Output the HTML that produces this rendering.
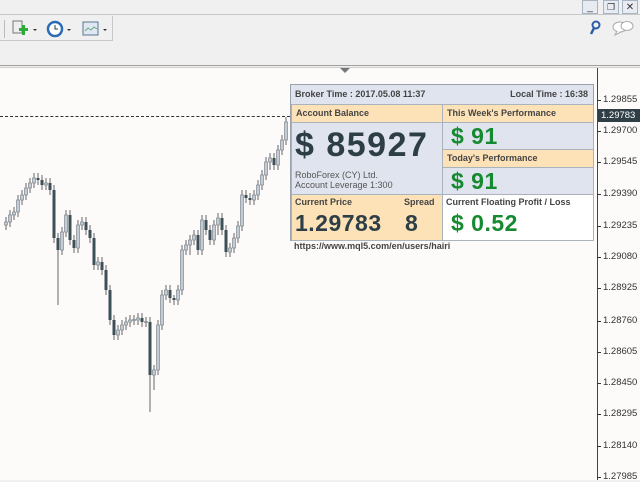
<!DOCTYPE html>
<html><head><meta charset="utf-8"><style>
*{margin:0;padding:0;box-sizing:border-box}
body{width:640px;height:480px;overflow:hidden;background:#f0f0f0;font-family:"Liberation Sans",sans-serif;position:relative}
.abs{position:absolute}
.panel{position:absolute;left:290px;top:84px;width:304px;height:157px;border:1px solid #9aa3ad;background:#dfe4ee}
.c{position:absolute;border:1px solid #aab2bb}
.lbl{font-size:9px;font-weight:bold;color:#444;padding:3px 0 0 4px}
.pe{background:#fde2b8}
.bl{background:#dfe4ee}
.g{color:#168a30;font-weight:bold;font-size:23px;position:absolute;letter-spacing:0.5px}
.ps{position:absolute;left:603px;font-size:9.5px;color:#333}
.tk{position:absolute;left:597px;width:4px;height:1px;background:#333}
</style></head><body>
<div class="abs" style="left:0;top:0;width:640px;height:15px;background:#f0f0f0;border-bottom:1px solid #c8c8c8"></div>
<div class="abs" style="left:582px;top:0;width:16px;height:14px;border:1px solid #a9b4c2;background:#e8ecf2;font-size:10px;text-align:center;line-height:14px;color:#333">_</div>
<div class="abs" style="left:603px;top:0;width:16px;height:14px;border:1px solid #a9b4c2;background:#e8ecf2;font-size:9px;text-align:center;line-height:13px;color:#333">❐</div>
<div class="abs" style="left:622px;top:0;width:16px;height:14px;border:1px solid #a9b4c2;background:#e8ecf2;font-size:10px;text-align:center;line-height:13px;color:#333">✕</div>
<div class="abs" style="left:0;top:16px;width:113px;height:25px;border-bottom:1px solid #c8c8c8;border-right:1px solid #c8c8c8"></div>
<div class="abs" style="left:4px;top:20px;width:1px;height:18px;background:#bbb"></div>
<svg class="abs" style="left:10px;top:18px" width="110" height="22">
<rect x="3" y="3" width="9" height="12" fill="#eee" stroke="#777"/><rect x="9" y="10" width="9" height="3" fill="#2eaa3a"/><rect x="12" y="7" width="3" height="10" fill="#2eaa3a"/>
<path d="M23 11 l4 0 l-2 2z" fill="#333"/>
<circle cx="45" cy="11" r="7" fill="#fff" stroke="#2c6cb5" stroke-width="2.5"/><path d="M45 7 V11 H48" stroke="#333" fill="none"/>
<path d="M57 11 l4 0 l-2 2z" fill="#333"/>
<rect x="73" y="4" width="15" height="13" fill="#dfe8f2" stroke="#5a7590"/><path d="M75 13 l3-3 3 2 3-3 3 2" stroke="#6a8" fill="none"/>
<path d="M93 11 l4 0 l-2 2z" fill="#333"/>
</svg>
<svg class="abs" style="left:588px;top:20px" width="14" height="16"><circle cx="8" cy="5" r="3.5" fill="none" stroke="#2c5ea8" stroke-width="2"/><path d="M6 8 L3 14" stroke="#2c5ea8" stroke-width="2.5"/></svg>
<svg class="abs" style="left:612px;top:20px" width="24" height="16"><ellipse cx="8" cy="7" rx="7" ry="5" fill="#fff" stroke="#aaa"/><ellipse cx="15" cy="6" rx="6" ry="4.5" fill="#fff" stroke="#aaa"/><path d="M5 11 L3 15 L9 12" fill="#fff" stroke="#aaa"/></svg>
<div class="abs" style="left:0;top:65px;width:640px;height:3px;border-top:1px solid #a0a0a0;border-bottom:1px solid #d0d0d0"></div>
<div class="abs" style="left:0;top:68px;width:640px;height:412px;background:#fdfafa"></div>
<div class="abs" style="left:597px;top:68px;width:1px;height:412px;background:#444"></div>
<svg class="abs" style="left:340px;top:68px" width="12" height="6"><path d="M0 0 H10 L5 5z" fill="#777"/></svg>
<div class="abs" style="left:0;top:116px;width:290px;border-top:1px dashed #333"></div>
<svg class="abs" style="left:0;top:0" width="300" height="480">
<path stroke="#666" stroke-width="1" d="M6 217V230M10 210V227M14 207V220M18 195V217M22 190V205M26 183V200M30 178V193M34 173V188M38 173V185M42 175V190M46 178V190M50 178V195M54 185V243M58 233V305M62 227V255M66 210V237M70 210V245M74 235V253M78 220V253M82 217V230M86 217V235M90 225V243M94 233V270M98 257V270M102 257V275M106 265V295M110 285V325M114 315V340M118 325V340M122 320V335M126 317V330M130 315V327M134 315V325M138 313V325M142 313V327M146 317V327M150 317V412M154 365V390M158 320V375M162 290V330M166 285V300M170 285V303M174 295V305M178 285V305M182 245V295M186 240V255M190 235V255M194 230V245M198 230V255M202 215V255M206 215V235M210 225V245M214 220V245M218 213V235M222 213V235M226 225V257M230 243V257M234 233V253M238 221V243M242 190V231M246 190V203M250 193V205M254 190V205M258 180V200M262 170V190M266 157V180M270 153V170M274 153V170M278 145V170M282 135V155M286 117V145"/>
<g fill="#c5cbd1" stroke="#7d8a91" stroke-width="0.7">
<rect x="4.5" y="222" width="3" height="3"/><rect x="8.5" y="215" width="3" height="7"/><rect x="12.5" y="212" width="3" height="3"/><rect x="16.5" y="200" width="3" height="12"/><rect x="20.5" y="195" width="3" height="5"/><rect x="24.5" y="188" width="3" height="7"/><rect x="28.5" y="183" width="3" height="5"/><rect x="32.5" y="178" width="3" height="5"/><rect x="44.5" y="183" width="3" height="2"/><rect x="60.5" y="232" width="3" height="18"/><rect x="64.5" y="215" width="3" height="17"/><rect x="76.5" y="225" width="3" height="23"/><rect x="80.5" y="222" width="3" height="3"/><rect x="96.5" y="262" width="3" height="3"/><rect x="116.5" y="330" width="3" height="5"/><rect x="120.5" y="325" width="3" height="5"/><rect x="124.5" y="322" width="3" height="3"/><rect x="128.5" y="320" width="3" height="2"/><rect x="132.5" y="319.5" width="3" height="1"/><rect x="136.5" y="318" width="3" height="2"/><rect x="144.5" y="321.5" width="3" height="1"/><rect x="152.5" y="370" width="3" height="5"/><rect x="156.5" y="325" width="3" height="45"/><rect x="160.5" y="295" width="3" height="30"/><rect x="164.5" y="290" width="3" height="5"/><rect x="176.5" y="290" width="3" height="10"/><rect x="180.5" y="250" width="3" height="40"/><rect x="184.5" y="245" width="3" height="5"/><rect x="188.5" y="240" width="3" height="5"/><rect x="192.5" y="235" width="3" height="5"/><rect x="200.5" y="220" width="3" height="30"/><rect x="212.5" y="225" width="3" height="15"/><rect x="216.5" y="218" width="3" height="7"/><rect x="228.5" y="248" width="3" height="4"/><rect x="232.5" y="238" width="3" height="10"/><rect x="236.5" y="226" width="3" height="12"/><rect x="240.5" y="195" width="3" height="31"/><rect x="252.5" y="195" width="3" height="5"/><rect x="256.5" y="185" width="3" height="10"/><rect x="260.5" y="175" width="3" height="10"/><rect x="264.5" y="162" width="3" height="13"/><rect x="268.5" y="158" width="3" height="4"/><rect x="276.5" y="150" width="3" height="15"/><rect x="280.5" y="140" width="3" height="10"/><rect x="284.5" y="122" width="3" height="18"/>
</g>
<g fill="#3d5058">
<rect x="36.5" y="178" width="3" height="2"/><rect x="40.5" y="180" width="3" height="5"/><rect x="48.5" y="183" width="3" height="7"/><rect x="52.5" y="190" width="3" height="48"/><rect x="56.5" y="238" width="3" height="12"/><rect x="68.5" y="215" width="3" height="25"/><rect x="72.5" y="240" width="3" height="8"/><rect x="84.5" y="222" width="3" height="8"/><rect x="88.5" y="230" width="3" height="8"/><rect x="92.5" y="238" width="3" height="27"/><rect x="100.5" y="262" width="3" height="8"/><rect x="104.5" y="270" width="3" height="20"/><rect x="108.5" y="290" width="3" height="30"/><rect x="112.5" y="320" width="3" height="15"/><rect x="140.5" y="318" width="3" height="4"/><rect x="148.5" y="322" width="3" height="53"/><rect x="168.5" y="290" width="3" height="8"/><rect x="172.5" y="298" width="3" height="2"/><rect x="196.5" y="235" width="3" height="15"/><rect x="204.5" y="220" width="3" height="10"/><rect x="208.5" y="230" width="3" height="10"/><rect x="220.5" y="218" width="3" height="12"/><rect x="224.5" y="230" width="3" height="22"/><rect x="244.5" y="195" width="3" height="3"/><rect x="248.5" y="198" width="3" height="2"/><rect x="272.5" y="158" width="3" height="7"/>
</g>
</svg>
<div class="tk" style="top:100px"></div><div class="ps" style="top:94px">1.29855</div>
<div class="abs" style="left:598px;top:109px;width:42px;height:13px;background:#2f3f45;color:#fff;font-size:9.5px;padding:1px 0 0 3px">1.29783</div>
<div class="tk" style="top:131px"></div><div class="ps" style="top:125px">1.29700</div>
<div class="tk" style="top:162px"></div><div class="ps" style="top:156px">1.29545</div>
<div class="tk" style="top:194px"></div><div class="ps" style="top:188px">1.29390</div>
<div class="tk" style="top:226px"></div><div class="ps" style="top:220px">1.29235</div>
<div class="tk" style="top:257px"></div><div class="ps" style="top:251px">1.29080</div>
<div class="tk" style="top:288px"></div><div class="ps" style="top:282px">1.28925</div>
<div class="tk" style="top:321px"></div><div class="ps" style="top:315px">1.28760</div>
<div class="tk" style="top:352px"></div><div class="ps" style="top:346px">1.28605</div>
<div class="tk" style="top:383px"></div><div class="ps" style="top:377px">1.28450</div>
<div class="tk" style="top:414px"></div><div class="ps" style="top:408px">1.28295</div>
<div class="tk" style="top:446px"></div><div class="ps" style="top:440px">1.28140</div>
<div class="tk" style="top:477px"></div><div class="ps" style="top:471px">1.27985</div>
<div class="panel">
<div class="abs" style="left:4px;top:4px;font-size:9px;font-weight:bold;color:#444">Broker Time : 2017.05.08 11:37</div>
<div class="abs" style="right:5px;top:4px;font-size:9px;font-weight:bold;color:#444">Local Time : 16:38</div>
<div class="c pe lbl" style="left:0;top:19px;width:152px;height:19px">Account Balance</div>
<div class="c bl" style="left:0;top:37px;width:152px;height:73px"></div>
<div class="abs" style="left:4px;top:41px;font-size:34px;font-weight:bold;color:#2e3e46;letter-spacing:1.5px">$ 85927</div>
<div class="abs" style="left:4px;top:85px;font-size:9px;color:#555;line-height:10px">RoboForex (CY) Ltd.<br>Account Leverage 1:300</div>
<div class="c pe lbl" style="left:151px;top:19px;width:152px;height:19px">This Week's Performance</div>
<div class="c bl" style="left:151px;top:37px;width:152px;height:28px"></div>
<div class="g" style="left:160px;top:38px">$ 91</div>
<div class="c pe lbl" style="left:151px;top:64px;width:152px;height:19px">Today's Performance</div>
<div class="c bl" style="left:151px;top:82px;width:152px;height:28px"></div>
<div class="g" style="left:160px;top:83px">$ 91</div>
<div class="c pe" style="left:0;top:109px;width:152px;height:47px"></div>
<div class="abs lbl" style="left:0;top:109px">Current Price</div>
<div class="abs lbl" style="left:109px;top:109px">Spread</div>
<div class="abs" style="left:4px;top:125px;font-size:23px;font-weight:bold;color:#2e3e46;letter-spacing:0.5px">1.29783</div>
<div class="abs" style="left:114px;top:125px;font-size:23px;font-weight:bold;color:#2e3e46">8</div>
<div class="c" style="left:151px;top:109px;width:152px;height:47px;background:#fff"></div>
<div class="abs lbl" style="left:151px;top:109px">Current Floating Profit / Loss</div>
<div class="g" style="left:160px;top:125px">$ 0.52</div>
</div>
<div class="abs" style="left:294px;top:241px;font-size:9px;font-weight:bold;color:#444">https://www.mql5.com/en/users/hairi</div>
</body></html>
